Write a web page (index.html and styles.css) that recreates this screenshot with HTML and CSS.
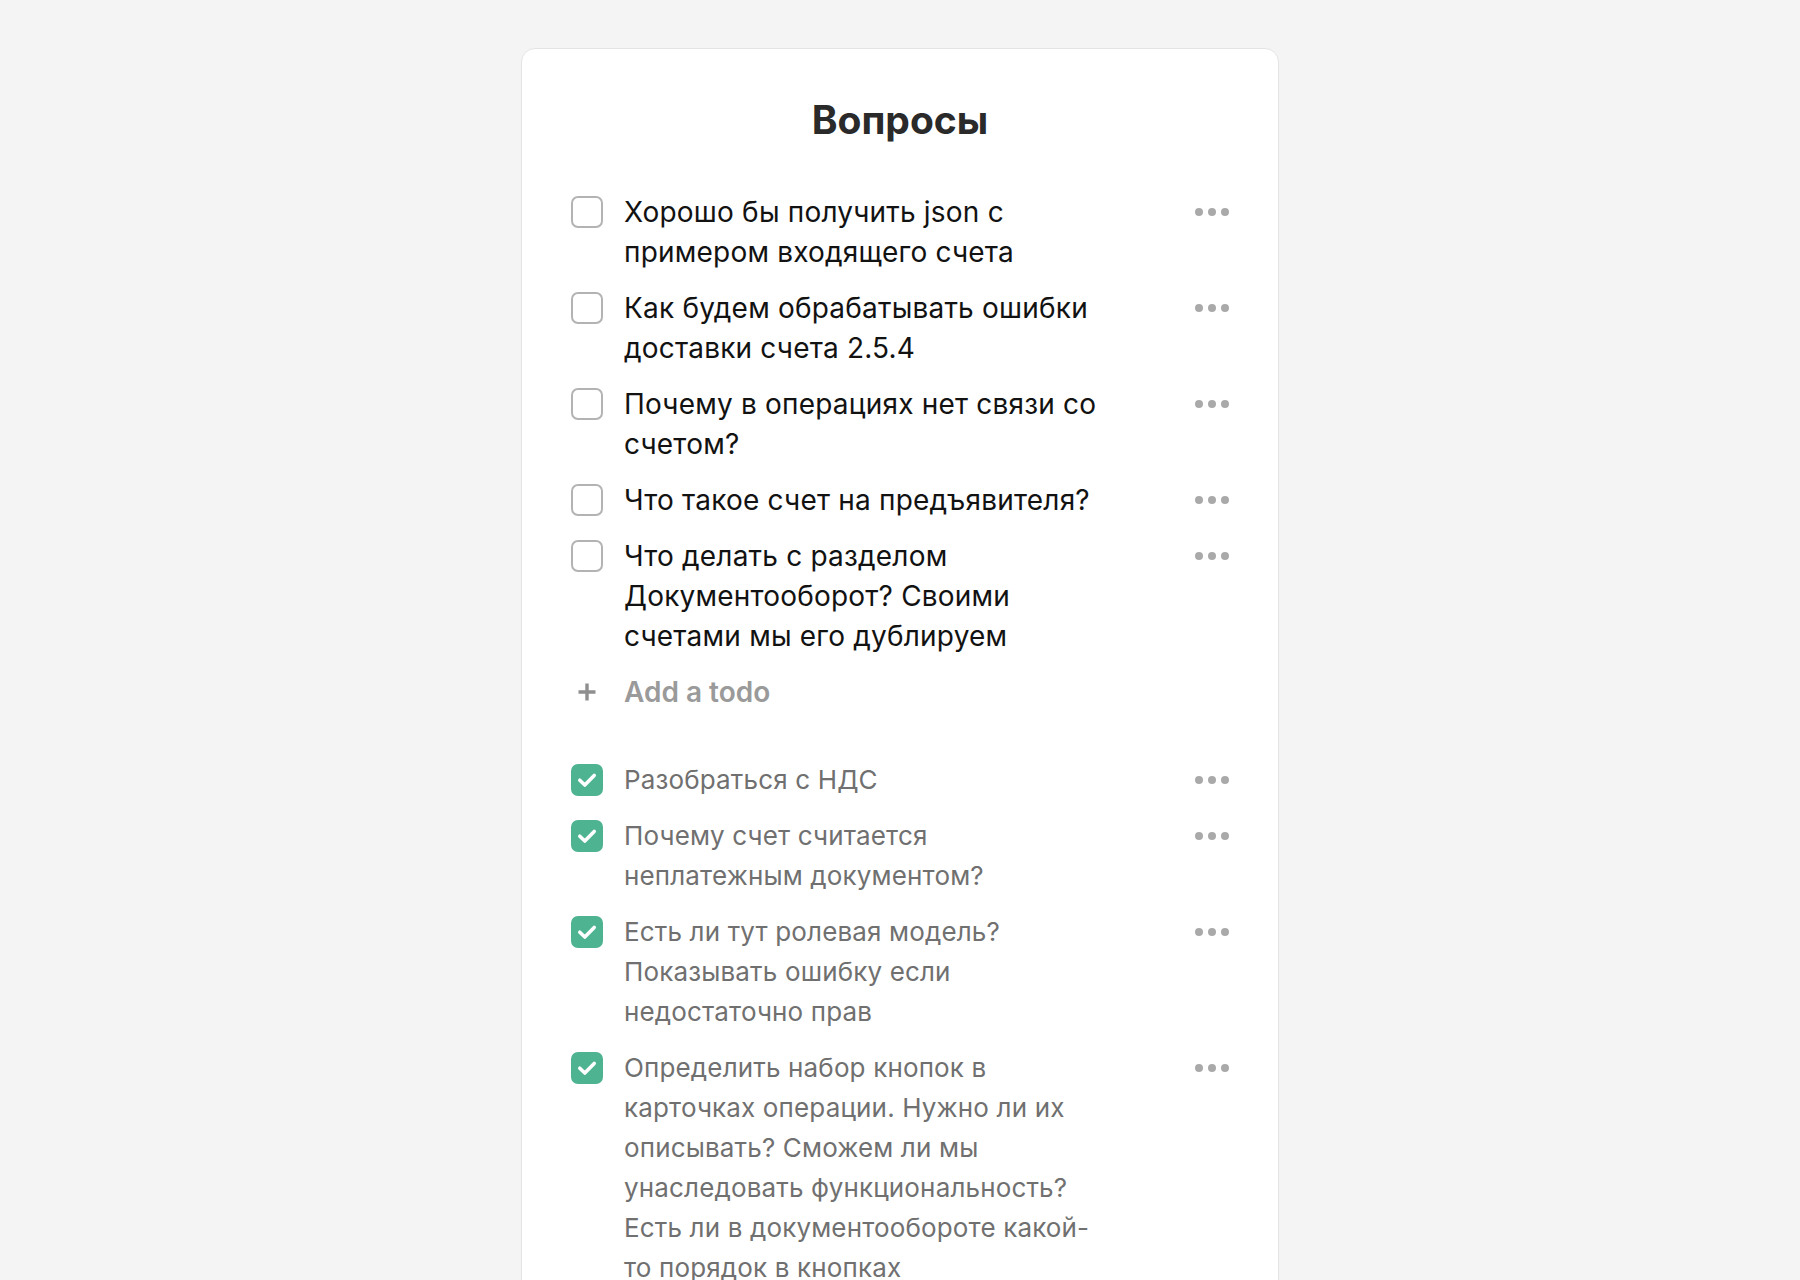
FILE: index.html
```html
<!DOCTYPE html>
<html lang="ru">
<head>
<meta charset="utf-8">
<title>Вопросы</title>
<link rel="stylesheet" href="styles.css">
</head>
<body>
<main class="card">
  <h1 class="title">Вопросы</h1>

  <ul class="list">
    <li class="todo">
      <span class="box"></span>
      <span class="text">Хорошо бы получить json с примером входящего счета</span>
      <span class="more"><i></i><i></i><i></i></span>
    </li>
    <li class="todo">
      <span class="box"></span>
      <span class="text">Как будем обрабатывать ошибки доставки счета 2.5.4</span>
      <span class="more"><i></i><i></i><i></i></span>
    </li>
    <li class="todo">
      <span class="box"></span>
      <span class="text">Почему в операциях нет связи со счетом?</span>
      <span class="more"><i></i><i></i><i></i></span>
    </li>
    <li class="todo">
      <span class="box"></span>
      <span class="text">Что такое счет на предъявителя?</span>
      <span class="more"><i></i><i></i><i></i></span>
    </li>
    <li class="todo">
      <span class="box"></span>
      <span class="text">Что делать с разделом Документооборот? Своими счетами мы его дублируем</span>
      <span class="more"><i></i><i></i><i></i></span>
    </li>
    <li class="add">
      <span class="plus"><svg width="20" height="20" viewBox="0 0 20 20"><path d="M10 1.5v17M1.5 10h17" stroke="#8f8f8f" stroke-width="3.4" fill="none"/></svg></span>
      <span class="add-text">Add a todo</span>
    </li>
  </ul>

  <ul class="list done-list">
    <li class="todo done">
      <span class="box checked"><svg width="32" height="32" viewBox="0 0 32 32"><path d="M8.8 16.2l5 4.8 9.4-9.6" stroke="#fff" stroke-width="3.6" fill="none" stroke-linecap="round" stroke-linejoin="round"/></svg></span>
      <span class="text">Разобраться с НДС</span>
      <span class="more"><i></i><i></i><i></i></span>
    </li>
    <li class="todo done">
      <span class="box checked"><svg width="32" height="32" viewBox="0 0 32 32"><path d="M8.8 16.2l5 4.8 9.4-9.6" stroke="#fff" stroke-width="3.6" fill="none" stroke-linecap="round" stroke-linejoin="round"/></svg></span>
      <span class="text">Почему счет считается неплатежным документом?</span>
      <span class="more"><i></i><i></i><i></i></span>
    </li>
    <li class="todo done">
      <span class="box checked"><svg width="32" height="32" viewBox="0 0 32 32"><path d="M8.8 16.2l5 4.8 9.4-9.6" stroke="#fff" stroke-width="3.6" fill="none" stroke-linecap="round" stroke-linejoin="round"/></svg></span>
      <span class="text">Есть ли тут ролевая модель? Показывать ошибку если недостаточно прав</span>
      <span class="more"><i></i><i></i><i></i></span>
    </li>
    <li class="todo done">
      <span class="box checked"><svg width="32" height="32" viewBox="0 0 32 32"><path d="M8.8 16.2l5 4.8 9.4-9.6" stroke="#fff" stroke-width="3.6" fill="none" stroke-linecap="round" stroke-linejoin="round"/></svg></span>
      <span class="text">Определить набор кнопок в карточках операции. Нужно ли их описывать? Сможем ли мы унаследовать функциональность? Есть ли в документообороте какой-то порядок в кнопках</span>
      <span class="more"><i></i><i></i><i></i></span>
    </li>
  </ul>
</main>
</body>
</html>
```
FILE: styles.css
```css
html, body {
  margin: 0;
  padding: 0;
}

body {
  background: #f4f4f4;
  font-family: Inter, "Noto Sans", "DejaVu Sans", sans-serif;
  padding: 48px 0 80px;
}

.card {
  box-sizing: border-box;
  width: 758px;
  margin: 0 auto;
  background: #ffffff;
  border: 1px solid #e4e4e4;
  border-radius: 14px;
  padding: 47px 49px 60px;
}

.title {
  margin: 0 0 48px;
  text-align: center;
  font-size: 39px;
  line-height: 48px;
  font-weight: 700;
  color: #2a2a2a;
  letter-spacing: 0;
}

.list {
  list-style: none;
  margin: 0;
  padding: 0;
  display: flex;
  flex-direction: column;
  gap: 16px;
}

.done-list {
  margin-top: 48px;
}

.todo, .add {
  display: flex;
  align-items: flex-start;
}

.box {
  flex: none;
  box-sizing: border-box;
  width: 32px;
  height: 32px;
  margin-top: 4px;
  margin-right: 21px;
  border: 2px solid #b3b3b3;
  border-radius: 7px;
  background: #fff;
}

.box.checked {
  border: none;
  background: #4db390;
}

.box.checked svg {
  display: block;
}

.text {
  flex: 1;
  padding-right: 92px;
  font-size: 28px;
  line-height: 40px;
  letter-spacing: 0.2px;
  color: #121212;
}

.done .text {
  font-size: 26px;
  letter-spacing: 0.15px;
  color: #707070;
}

.more {
  flex: none;
  display: flex;
  gap: 4.8px;
  height: 40px;
  align-items: center;
}

.more i {
  display: block;
  width: 8px;
  height: 8px;
  border-radius: 50%;
  background: #a9a9a9;
}

.plus {
  flex: none;
  width: 32px;
  height: 40px;
  margin-right: 21px;
  display: flex;
  align-items: center;
  justify-content: center;
}

.plus svg {
  display: block;
}

.add-text {
  font-size: 28px;
  line-height: 40px;
  font-weight: 600;
  color: #9a9a9a;
}
```
